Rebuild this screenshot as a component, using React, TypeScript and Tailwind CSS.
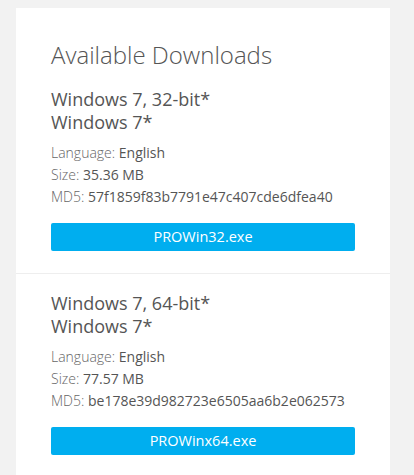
const downloads = [
  {
    title: 'Windows 7, 32-bit*',
    os: 'Windows 7*',
    language: 'English',
    size: '35.36 MB',
    md5: '57f1859f83b7791e47c407cde6dfea40',
    file: 'PROWin32.exe',
  },
  {
    title: 'Windows 7, 64-bit*',
    os: 'Windows 7*',
    language: 'English',
    size: '77.57 MB',
    md5: 'be178e39d982723e6505aa6b2e062573',
    file: 'PROWinx64.exe',
  },
];

export default function App() {
  return (
    <div className="min-h-[475px] bg-[#f2f2f2] pt-2 pl-4 pr-6 font-['Open_Sans',sans-serif]">
      <div className="bg-white">
        {downloads.map((d, i) => (
          <div
            key={d.file}
            className={
              i === 0
                ? 'px-[35px] pt-[31px] pb-[22px] border-b border-[#eeeeee]'
                : 'px-[35px] pt-[18px] pb-[21px]'
            }
          >
            {i === 0 && (
              <h2 className="text-[24px] leading-[32px] font-light text-[#555555] mb-[17px]">
                Available Downloads
              </h2>
            )}
            <h3 className="text-[18px] leading-[23px] text-[#555555]">
              {d.title}
              <br />
              {d.os}
            </h3>
            <div className={i === 0 ? 'mt-[7.5px] text-[14px] leading-[22px] text-[#555555]' : 'mt-[8.5px] text-[14px] leading-[22px] text-[#555555]'}>
              <p>
                <span className="font-light text-[#666666]">Language:</span> {d.language}
              </p>
              <p>
                <span className="font-light text-[#666666]">Size:</span> {d.size}
              </p>
              <p>
                <span className="font-light text-[#666666]">MD5:</span> {d.md5}
              </p>
            </div>
            <button
              type="button"
              className="mt-[15px] w-full h-[28px] rounded-[2px] bg-[#00aeef] text-white text-[14.5px] leading-[28px]"
            >
              {d.file}
            </button>
          </div>
        ))}
      </div>
    </div>
  );
}
